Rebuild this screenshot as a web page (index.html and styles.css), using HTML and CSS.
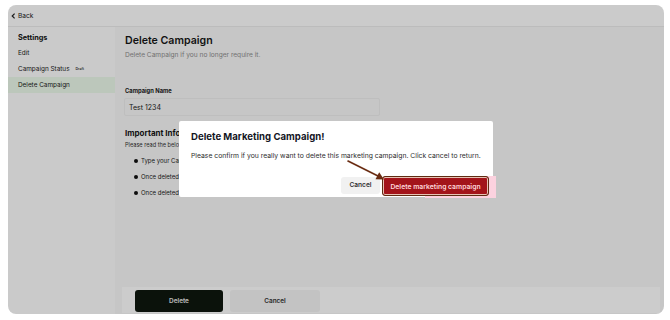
FILE: index.html
```html
<!DOCTYPE html>
<html>
<head>
<meta charset="utf-8">
<link rel="stylesheet" href="styles.css">
</head>
<body>
<div class="app">
  <div class="topbar">
    <svg class="chev" width="5" height="6" viewBox="0 0 5 6"><path d="M3.6 0.6 L1.2 3 L3.6 5.4" fill="none" stroke="#222" stroke-width="1.2"/></svg>
    <span class="back">Back</span>
  </div>
  <div class="body">
    <aside class="sidebar">
      <div class="side-head">Settings</div>
      <div class="side-item">Edit</div>
      <div class="side-item">Campaign Status <span class="badge">Draft</span></div>
      <div class="side-item active">Delete Campaign</div>
    </aside>
    <main class="main">
      <div class="content">
        <h1 class="title">Delete Campaign</h1>
        <p class="subtitle">Delete Campaign if you no longer require it.</p>
        <div class="label">Campaign Name</div>
        <div class="input">Test 1234</div>
        <h2 class="info-title">Important Information</h2>
        <p class="info-sub">Please read the below information carefully.</p>
        <ul class="bullets">
          <li>Type your Campaign Name to confirm deletion.</li>
          <li>Once deleted, the campaign cannot be recovered.</li>
          <li>Once deleted, all associated data will be removed.</li>
        </ul>
      </div>
      <div class="footer">
        <button class="btn-dark">Delete</button>
        <button class="btn-gray">Cancel</button>
      </div>
    </main>
  </div>
  <div class="overlay">
    <div class="modal">
      <div class="modal-title">Delete Marketing Campaign!</div>
      <div class="modal-text">Please confirm if you really want to delete this marketing campaign. Click cancel to return.</div>
      <div class="modal-actions">
        <button class="m-cancel">Cancel</button>
        <button class="m-delete">Delete marketing campaign</button>
      </div>
      <svg class="arrow" width="44" height="26" viewBox="0 0 44 26">
        <line x1="3" y1="3" x2="34" y2="18.5" stroke="#6a2c12" stroke-width="1.6" stroke-linecap="round"/>
        <polygon points="39,21.5 30.5,21.2 34.2,14.2" fill="#6a2c12"/>
      </svg>
    </div>
  </div>
</div>
</body>
</html>
```

FILE: styles.css
```css
* { box-sizing: border-box; }
html, body { margin: 0; padding: 0; background: #ffffff; }
body { font-family: Inter, "Noto Sans", "Liberation Sans", sans-serif; color: #1a1a1a; }

.app {
  position: relative;
  margin: 5px 0 0 8px;
  width: 656px;
  height: 309px;
  border-radius: 8px;
  overflow: hidden;
  background: #fdfdfd;
  display: flex;
  flex-direction: column;
}

.topbar {
  height: 22px;
  flex: none;
  display: flex;
  align-items: center;
  padding-left: 3px;
  gap: 2px;
  border-bottom: 1px solid #ececec;
  background: #fefefe;
}
.chev { display: block; }
.back { font-size: 6.6px; color: #222; }

.body { flex: 1; display: flex; min-height: 0; }

.sidebar {
  width: 107px;
  flex: none;
  padding-top: 2px;
  background: #fdfdfd;
}
.side-head, .side-item {
  height: 16px;
  display: flex;
  align-items: center;
  padding-left: 10px;
  font-size: 6.4px;
  color: #222;
}
.side-head { font-weight: 700; font-size: 7.3px; color: #141414; }
.side-item.active { background: #ebf9ea; }
.badge { font-size: 3.6px; color: #444; margin-left: 6px; font-weight: 600; }

.main {
  flex: 1;
  display: flex;
  flex-direction: column;
  background: #f8f8f8;
}
.content { flex: 1; padding: 7px 0 0 10px; }
.title { margin: 0; font-size: 10.6px; line-height: 14px; font-weight: 600; color: #161616; }
.subtitle { margin: 2px 0 0; font-size: 6.6px; line-height: 10px; color: #8e8e8e; }
.label { margin-top: 26px; font-size: 5.8px; line-height: 10px; font-weight: 700; color: #1c1c1c; }
.input {
  margin: 2px 0 0 -1px;
  width: 256px;
  height: 18px;
  border: 1px solid #eeeeee;
  border-radius: 2px;
  padding-left: 4px;
  display: flex;
  align-items: center;
  font-size: 7px;
  color: #222;
}
.info-title { margin: 12px 0 0; font-size: 8px; line-height: 10px; font-weight: 700; color: #161616; }
.info-sub { margin: 3px 0 0; font-size: 5.6px; line-height: 8px; color: #333; }
.bullets { margin: 7px 0 0; padding: 0 0 0 16px; list-style: none; }
.bullets li {
  position: relative;
  font-size: 6px;
  line-height: 10px;
  color: #222;
  margin-bottom: 6px;
}
.bullets li::before {
  content: "";
  position: absolute;
  left: -7px;
  top: 3px;
  width: 4px;
  height: 4px;
  border-radius: 50%;
  background: #111;
}

.footer {
  flex: none;
  height: 26px;
  margin: 0 4px 1px 7px;
  padding: 3px 13px;
  display: flex;
  gap: 7px;
  background: #ffffff;
}
.footer button {
  border: none;
  border-radius: 3px;
  font-family: inherit;
  font-size: 6.4px;
  font-weight: 600;
  height: 22px;
  padding: 0;
}
.btn-dark { width: 88px; background: #0e170e; color: #e8e8e8; }
.btn-gray { width: 90px; background: #f4f4f4; color: #333; }

.overlay {
  position: absolute;
  inset: 0;
  background: rgba(0, 0, 0, 0.2);
  display: flex;
  align-items: center;
  justify-content: center;
}
.modal {
  position: relative;
  z-index: 1;
  width: 314px;
  height: 76px;
  margin-top: -1px;
  background: #ffffff;
  border-radius: 2px;
  padding: 10px 4px 1px 12px;
  display: flex;
  flex-direction: column;
}
.modal-title { font-size: 9.6px; line-height: 12px; font-weight: 700; color: #14161f; }
.modal-text { margin-top: 8px; font-size: 6.8px; line-height: 9px; color: #2e2e2e; white-space: nowrap; }
.modal-actions {
  margin-top: auto;
  display: flex;
  justify-content: flex-end;
  align-items: center;
  gap: 2px;
}
.modal-actions button { font-family: inherit; padding: 0; cursor: pointer; }
.m-cancel {
  width: 39px;
  height: 17px;
  border: none;
  border-radius: 3px;
  background: #f1f1f1;
  font-size: 6.6px;
  font-weight: 600;
  color: #333;
  margin-top: -2px;
}
.m-delete {
  position: relative;
  width: 107px;
  height: 20px;
  border: 1px solid #5f2c12;
  border-radius: 3px;
  background: #a3141a;
  box-shadow: inset 0 0 0 1px #e8c2b4, inset 0 0 0 1.5px #a3141a;
  color: #ffd8dc;
  font-size: 6.8px;
  font-weight: 600;
}
.m-delete::after {
  content: "";
  position: absolute;
  z-index: -1;
  top: -1px;
  bottom: -3px;
  left: 40%;
  right: -8px;
  background: #fcd2df;
}
.arrow { position: absolute; left: 166px; top: 37px; }
```
